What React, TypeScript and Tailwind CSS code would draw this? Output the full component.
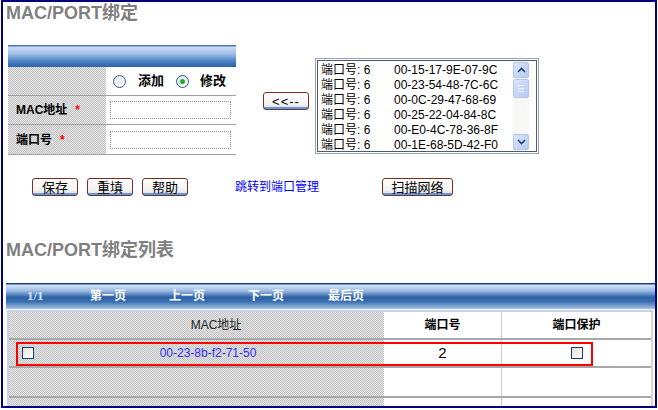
import React from "react";

const dither =
  "bg-[image:repeating-conic-gradient(#c2c2c2_0%_25%,#e6e6e6_0%_50%)] bg-[length:2px_2px]";

function Btn({ children, className = "" }: { children: React.ReactNode; className?: string }) {
  return (
    <div
      className={
        "shrink-0 h-[18px] flex items-center justify-center border border-[#7b2e22] rounded-[3px] text-[13px] leading-none text-black bg-[linear-gradient(to_bottom,#ffffff_0%,#f2f2f2_70%,#e4e4e4_86%,#5c9be6_87%,#5c9be6_100%)] " +
        className
      }
    >
      {children}
    </div>
  );
}

function Radio({ checked }: { checked?: boolean }) {
  return (
    <div className="shrink-0 w-[13px] h-[13px] rounded-full border border-[#2a5a94] bg-[linear-gradient(135deg,#dfe4ea_0%,#ffffff_100%)] flex items-center justify-center">
      {checked && <div className="w-[5px] h-[5px] rounded-full bg-[#2aa82a]" />}
    </div>
  );
}

function Check() {
  return (
    <div className="shrink-0 w-[12px] h-[12px] border border-[#1c3c6c] bg-[linear-gradient(135deg,#e4e2d4_0%,#ffffff_100%)]" />
  );
}

const listItems = [
  "00-15-17-9E-07-9C",
  "00-23-54-48-7C-6C",
  "00-0C-29-47-68-69",
  "00-25-22-04-84-8C",
  "00-E0-4C-78-36-8F",
  "00-1E-68-5D-42-F0",
];

function ScrollBtn({ dir }: { dir: "up" | "down" }) {
  return (
    <div className="shrink-0 w-[16px] h-[16px] rounded-[2px] border border-[#b4c6ec] bg-[linear-gradient(135deg,#dbe6fc_0%,#b6c9f4_100%)] flex items-center justify-center">
      <svg width="9" height="6" viewBox="0 0 9 6">
        {dir === "up" ? (
          <path d="M1 5 L4.5 1.5 L8 5" fill="none" stroke="#2b3f6c" strokeWidth="1.6" />
        ) : (
          <path d="M1 1 L4.5 4.5 L8 1" fill="none" stroke="#2b3f6c" strokeWidth="1.6" />
        )}
      </svg>
    </div>
  );
}

export default function App() {
  return (
    <div className="w-[658px] h-[410px] bg-white overflow-hidden font-['Liberation_Sans','Noto_Sans_CJK_SC',sans-serif] text-[12px] text-black">
      <div className="ml-px w-[656px] h-[408px] border-2 border-[#000080] flex flex-col overflow-hidden">
        {/* Title */}
        <div className="shrink-0 ml-[3px] h-[22px] leading-[22px] text-[18px] font-bold text-[#7f7f7f]">
          MAC/PORT绑定
        </div>

        {/* Form section */}
        <div className="shrink-0 mt-[21px] flex items-start">
          <div className="shrink-0 ml-[5px] w-[228px]">
            <div className="h-[22px] bg-[linear-gradient(to_bottom,#4b77b0_0px,#4b77b0_1px,#c8dbf5_2px,#a2c0e6_40%,#4d84c6_72%,#2d63aa_100%)]" />
            <div className="flex h-[29px] border-b border-[#a0a0a0]">
              <div className={"w-[98px] " + dither} />
              <div className="flex-1 flex items-center pl-[7px]">
                <Radio />
                <span className="ml-[12px] text-[13px] font-bold">添加</span>
                <div className="ml-[12px]">
                  <Radio checked />
                </div>
                <span className="ml-[11px] text-[13px] font-bold">修改</span>
              </div>
            </div>
            <div className="flex h-[29px] border-b border-[#a0a0a0]">
              <div className={"w-[98px] flex items-center pl-[8px] font-bold " + dither}>
                MAC地址<span className="ml-[8px] text-[#ff0000]">*</span>
              </div>
              <div className="flex-1 flex items-center pl-[4px]">
                <div className="w-[121px] h-[18px] border border-dotted border-[#909090]" />
              </div>
            </div>
            <div className="flex h-[30px] border-b border-[#a0a0a0]">
              <div className={"w-[98px] flex items-center pl-[8px] font-bold " + dither}>
                端口号<span className="ml-[8px] text-[#ff0000]">*</span>
              </div>
              <div className="flex-1 flex items-center pl-[4px]">
                <div className="w-[121px] h-[18px] border border-dotted border-[#909090]" />
              </div>
            </div>
          </div>

          <Btn className="ml-[27px] mt-[47px] w-[46px] text-[11px] tracking-[1px]">&lt;&lt;--</Btn>

          <div className="shrink-0 ml-[6px] mt-[13px] w-[224px] h-[96px] border border-[#8fa6c0] p-px">
            <div className="w-full h-full border border-[#5a5a5a] flex">
              <div className="flex-1 pt-[2px] pl-[3px]">
                {listItems.map((m) => (
                  <div key={m} className="h-[15px] leading-[15px] flex whitespace-nowrap">
                    <span className="w-[73px]">端口号: 6</span>
                    <span>{m}</span>
                  </div>
                ))}
              </div>
              <div className="w-[17px] mr-[6px] flex flex-col bg-[image:repeating-conic-gradient(#f4f2ec_0%_25%,#ffffff_0%_50%)] bg-[length:2px_2px] py-[1px]">
                <ScrollBtn dir="up" />
                <div className="shrink-0 mt-[1px] w-[16px] h-[19px] rounded-[2px] border border-[#b4c6ec] bg-[linear-gradient(135deg,#dbe6fc_0%,#b6c9f4_100%)] flex flex-col items-center justify-center gap-[2px]">
                  <div className="w-[6px] h-px bg-[#eef3ff]" />
                  <div className="w-[6px] h-px bg-[#eef3ff]" />
                  <div className="w-[6px] h-px bg-[#eef3ff]" />
                </div>
                <div className="flex-1" />
                <ScrollBtn dir="down" />
              </div>
            </div>
          </div>
        </div>

        {/* Buttons */}
        <div className="shrink-0 mt-[23px] ml-[29px] h-[18px] flex items-center">
          <Btn className="w-[46px]">保存</Btn>
          <Btn className="ml-[9px] w-[46px]">重填</Btn>
          <Btn className="ml-[9px] w-[46px]">帮助</Btn>
          <span className="ml-[47px] text-[#0000ff] text-[12px]">跳转到端口管理</span>
          <Btn className="ml-[63px] w-[71px]">扫描网络</Btn>
        </div>

        {/* Title 2 */}
        <div className="shrink-0 mt-[43px] ml-[3px] h-[22px] leading-[22px] text-[18px] font-bold text-[#7f7f7f]">
          MAC/PORT绑定列表
        </div>

        {/* Pagination bar */}
        <div className="shrink-0 mt-[22px] ml-[3px] h-[26px] flex items-center bg-[linear-gradient(to_bottom,#1b3f82_0px,#1b3f82_1px,#d6e4f6_2px,#9cbae2_30%,#2c62a6_55%,#3a70b0_72%,#a6c2e6_100%)] text-white font-bold text-[12px]">
          <span className="ml-[21px] w-[63px] font-['Liberation_Serif',serif] text-[13px] text-[#d2e4fa] font-bold">1/1</span>
          <span className="w-[79px]">第一页</span>
          <span className="w-[79px]">上一页</span>
          <span className="w-[80px]">下一页</span>
          <span>最后页</span>
        </div>

        {/* Table */}
        <div className="shrink-0 mt-px ml-[4px] w-[646px] h-[120px] border-l-2 border-t-2 border-[#c4d2ee]">
          <div className="border-r-2 border-[#d4d4d4] h-full">
            {/* header */}
            <div className="grid grid-cols-[375px_117px_1fr] h-[28px] border-b-2 border-[#a8a8a8]">
              <div className={"flex items-center pl-[39px] " + dither}>
                <span className="flex-1 text-center text-[#222]">MAC地址</span>
              </div>
              <div className="flex items-center justify-center font-bold">端口号</div>
              <div className="flex items-center justify-center font-bold border-l border-[#cccccc]">端口保护</div>
            </div>
            {/* row 1 */}
            <div className="relative grid grid-cols-[375px_117px_1fr] h-[28px] border-b-2 border-[#a8a8a8]">
              <div className={"flex items-center pl-[13px] " + dither}>
                <Check />
                <span className="flex-1 text-center text-[#3030ff] pr-[2px]">00-23-8b-f2-71-50</span>
              </div>
              <div className="flex items-center justify-center text-[15px]">2</div>
              <div className="flex items-center justify-center border-l border-[#cccccc]">
                <Check />
              </div>
              <div className="absolute left-[7px] top-[2px] w-[577px] h-[24px] border-2 border-[#ff0000]" />
            </div>
            {/* row 2 */}
            <div className="grid grid-cols-[375px_117px_1fr] h-[30px] border-b-2 border-[#a8a8a8]">
              <div className={dither} />
              <div />
              <div className="border-l border-[#cccccc]" />
            </div>
            {/* row 3 */}
            <div className="grid grid-cols-[375px_117px_1fr] h-[20px]">
              <div className={dither} />
              <div />
              <div className="border-l border-[#cccccc]" />
            </div>
          </div>
        </div>
      </div>
    </div>
  );
}
